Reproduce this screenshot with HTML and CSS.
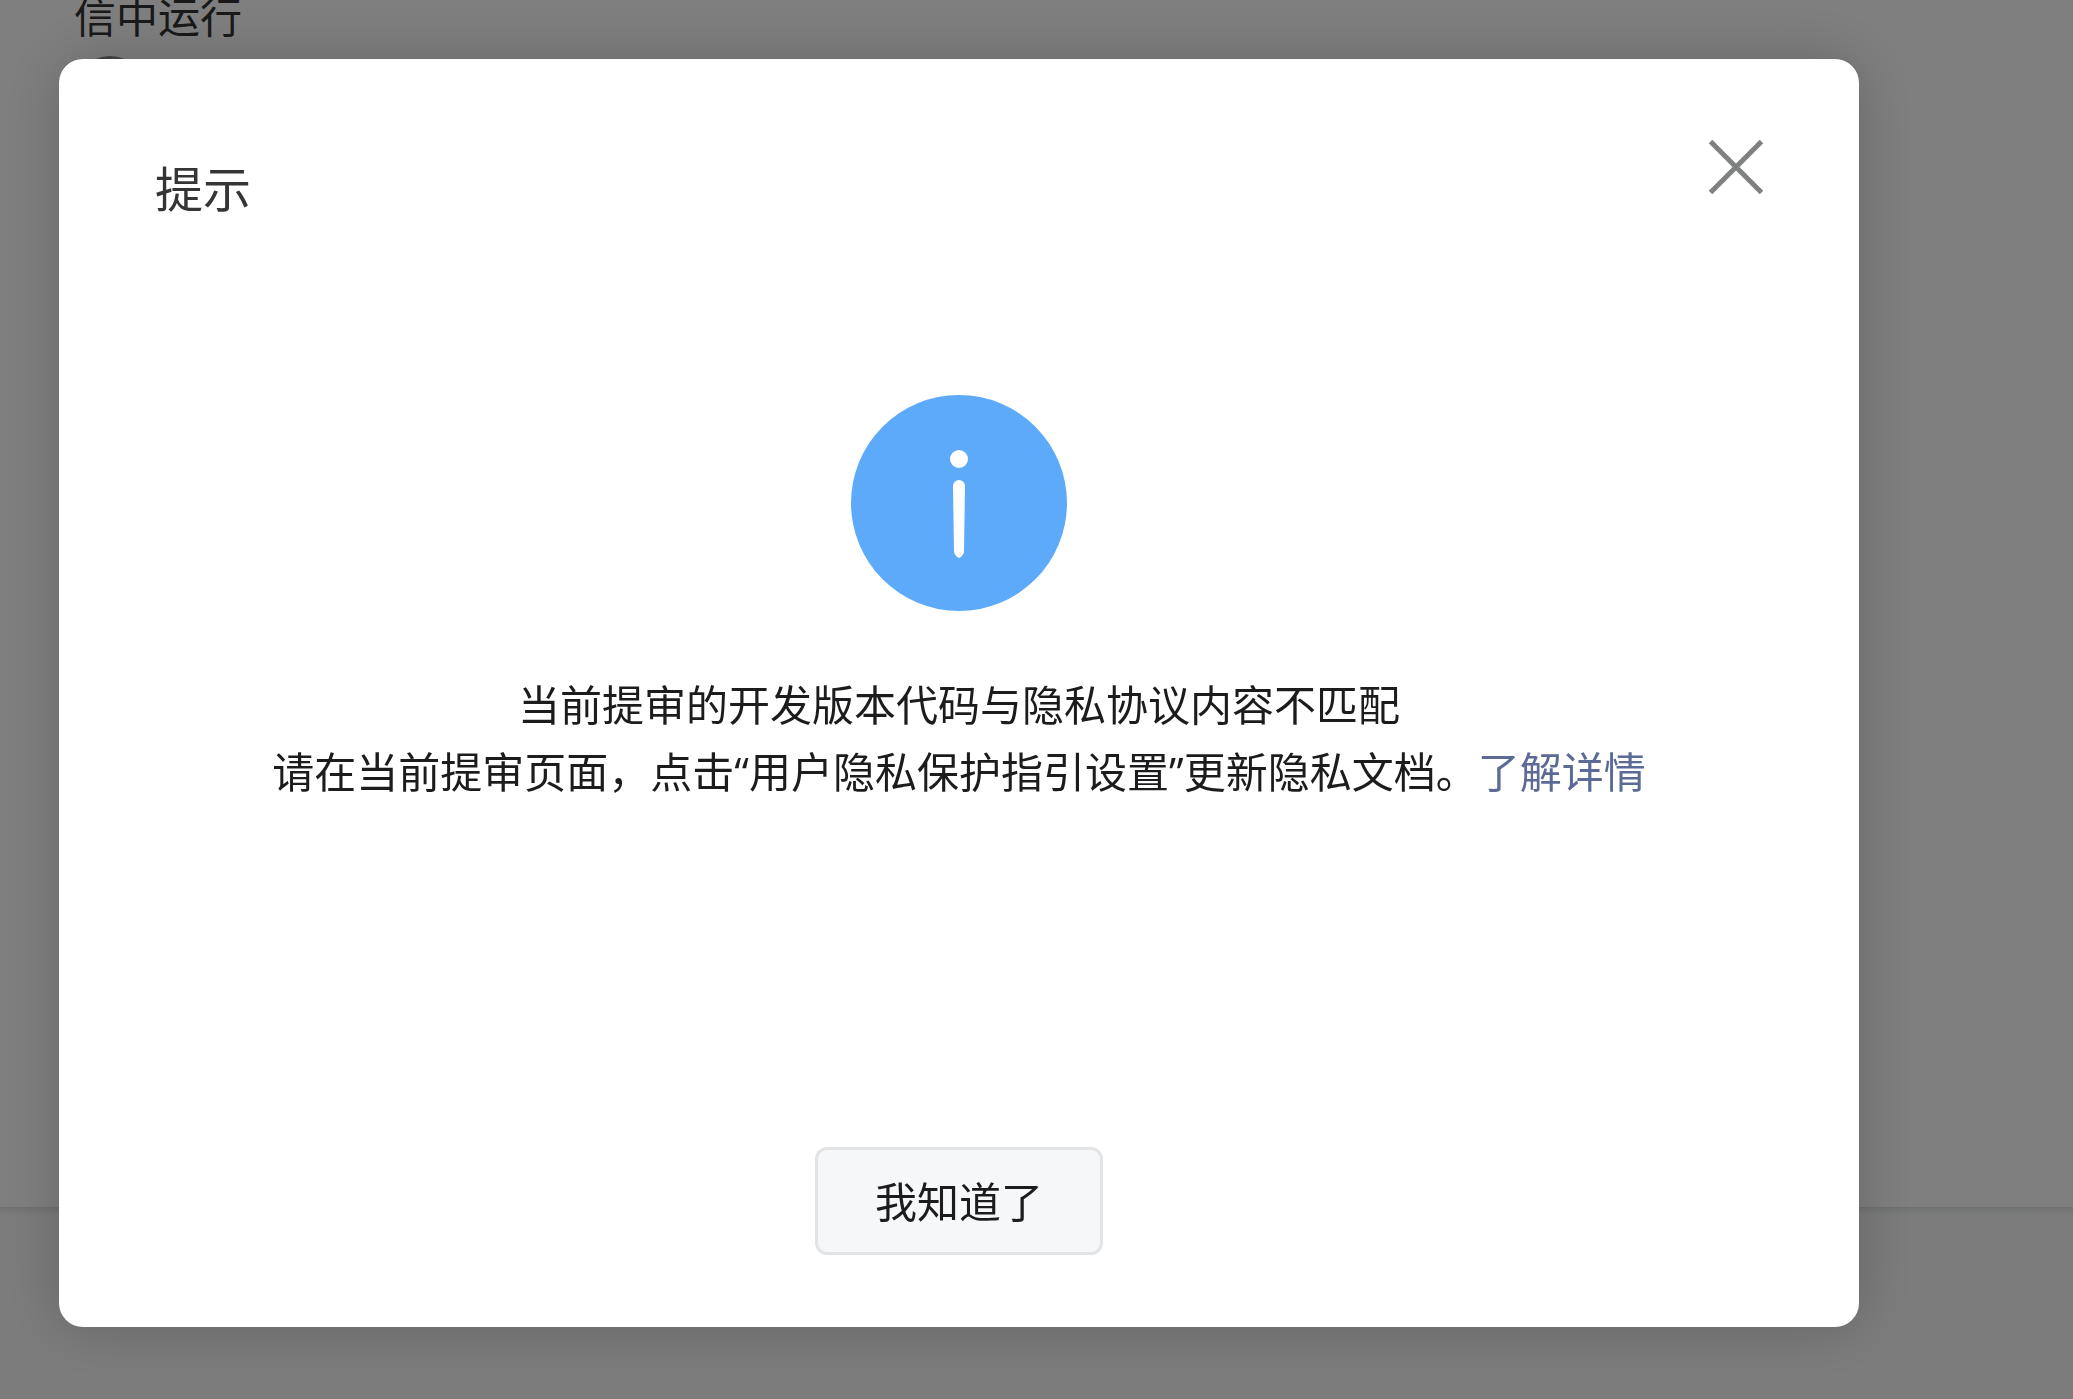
FILE: index.html
```html
<!DOCTYPE html>
<html lang="zh-CN">
<head>
<meta charset="utf-8">
<meta name="viewport" content="width=device-width, initial-scale=1">
<title>提示</title>
<link rel="stylesheet" href="styles.css">
</head>
<body>
<div class="page">
  <main class="panel">
    <p class="panel-text">信中运行</p>
    <span class="panel-dot"></span>
  </main>
  <footer class="page-footer"></footer>
</div>
<div class="mask">
  <section class="dialog" role="dialog" aria-modal="true" aria-labelledby="dialog-title">
    <header class="dialog-header">
      <h1 class="dialog-title" id="dialog-title">提示</h1>
      <button class="dialog-close" type="button" aria-label="关闭">
        <svg width="54" height="54" viewBox="0 0 54 54" fill="none" stroke="#7f8081" stroke-width="5"><path d="M1.5 1.5 52.5 52.5M52.5 1.5 1.5 52.5"/></svg>
      </button>
    </header>
    <div class="dialog-body">
      <svg class="info-icon" width="216" height="216" viewBox="0 0 216 216" aria-hidden="true">
        <circle cx="108" cy="108" r="108" fill="#5daafa"/>
        <circle cx="108" cy="64" r="9" fill="#fff"/>
        <path d="M102 91a6 6 0 0 1 12 0L113 157Q112 161 108 163 104 161 103 157Z" fill="#fff"/>
      </svg>
      <p class="message">当前提审的开发版本代码与隐私协议内容不匹配<br>请在当前提审页面，点击“用户隐私保护指引设置”更新隐私文档。<a class="link" href="#">了解详情</a></p>
    </div>
    <footer class="dialog-footer">
      <button class="button" type="button">我知道了</button>
    </footer>
  </section>
</div>
</body>
</html>
```
FILE: styles.css
```css
* {
  box-sizing: border-box;
}

body {
  margin: 0;
  color: #1c1c1e;
  background: #fff;
  font-family: "Open Sans", "Noto Sans CJK SC", sans-serif;
  font-size: 42px;
}

.page {
  display: grid;
  grid-template-rows: 1fr 192px;
  height: 100vh;
  overflow: hidden;
}

.panel {
  padding: 0 74px;
}

.panel-text {
  margin: 0;
  color: #333;
  line-height: 34px;
}

.panel-dot {
  display: block;
  width: 72px;
  height: 72px;
  margin-top: 22px;
  border-radius: 50%;
  background: #888;
}

.page-footer {
  background: linear-gradient(#dfe4e2, #f8f8f8 8px);
}

.mask {
  position: fixed;
  inset: 0;
  display: flex;
  align-items: flex-start;
  padding: 59px 214px 72px 59px;
  overflow: auto;
  background: rgba(0, 0, 0, 0.5);
}

.dialog {
  flex: 1;
  padding: 72px 96px;
  border-radius: 24px;
  background: #fff;
  box-shadow: 0 0 60px rgba(0, 0, 0, 0.2);
}

.dialog-header {
  display: flex;
  justify-content: space-between;
  align-items: flex-start;
}

.dialog-title {
  margin: 22px 0 0;
  color: #353535;
  font-size: 48px;
  font-weight: 400;
  line-height: 72px;
}

.dialog-close {
  display: flex;
  margin-top: 9px;
  padding: 0;
  border: 0;
  background: none;
  cursor: pointer;
}

.dialog-body {
  display: flex;
  flex-direction: column;
  align-items: center;
  padding-top: 170px;
}

.info-icon {
  display: block;
}

.message {
  margin: 60px 0 0;
  line-height: 67px;
  text-align: center;
}

.link {
  color: #5b6b96;
  text-decoration: none;
}

.dialog-footer {
  display: flex;
  justify-content: center;
  padding-top: 342px;
}

.button {
  min-width: 288px;
  height: 108px;
  padding: 0 24px 4px;
  border: 3px solid #e3e4e6;
  border-radius: 12px;
  background: #f6f7f9;
  color: inherit;
  font: inherit;
  cursor: pointer;
}
```
